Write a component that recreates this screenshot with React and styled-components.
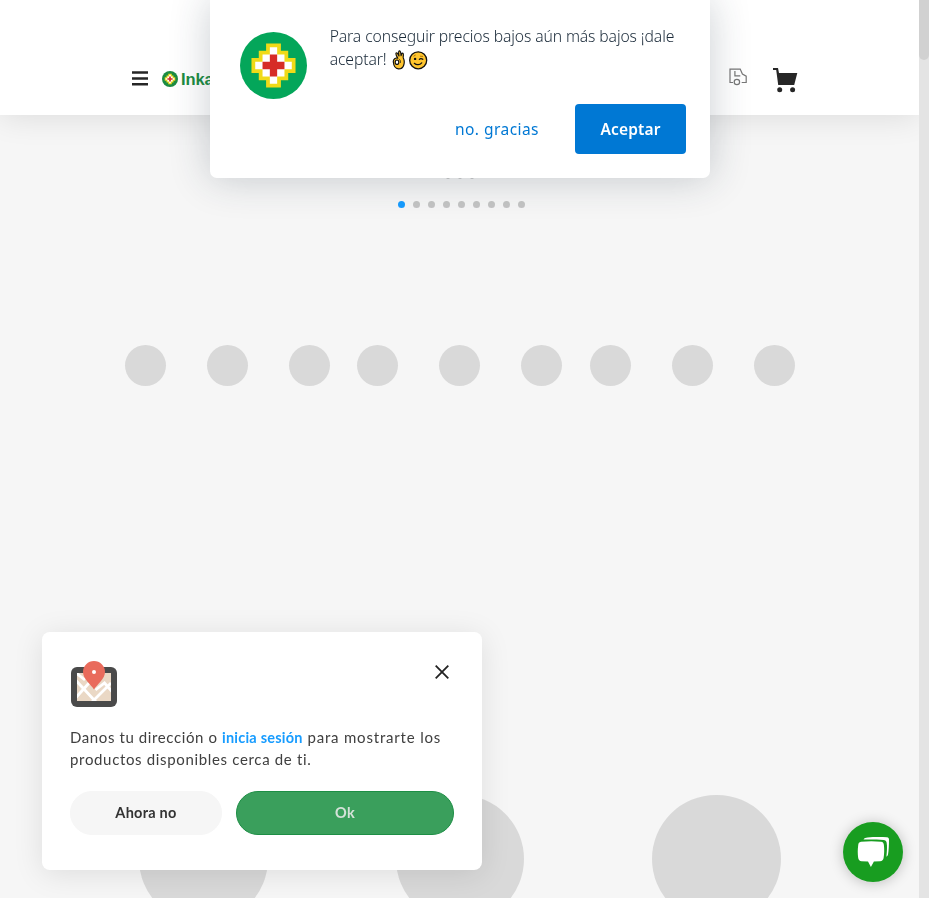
import React from "react";
import styled, { createGlobalStyle } from "styled-components";

const GlobalStyle = createGlobalStyle`
  * { box-sizing: border-box; }
  body { margin: 0; overflow: hidden; background: #f6f6f6; }
  button { font: inherit; border: 0; margin: 0; padding: 0; cursor: pointer; }
  svg { display: block; flex: none; }
`;

const Viewport = styled.div`
  display: grid;
  grid-template-columns: 1fr 10px;
  height: 898px;
  overflow: hidden;
`;

const Scrollbar = styled.div`
  background: #e4e4e4;
`;

const Thumb = styled.div`
  height: 60px;
  background: #d1d1d1;
  border-radius: 0 0 5px 5px;
`;

const Page = styled.main`
  display: flex;
  flex-direction: column;
  min-width: 0;
  overflow: hidden;
  background: #f6f6f6;
`;

const Header = styled.header`
  display: flex;
  align-items: center;
  flex: none;
  height: 115px;
  padding: 42px 121px 0 132px;
  background: #fff;
  box-shadow: 0 2px 30px rgba(0, 0, 0, 0.11);
`;

const Brand = styled.div`
  display: flex;
  align-items: center;
  gap: 3px;
  margin-left: 14px;
  color: #1c8c43;
  font: 700 16.5px/20px "Liberation Sans", Arial, sans-serif;
  letter-spacing: -0.1px;
`;

const HeaderActions = styled.div`
  display: flex;
  margin-left: auto;
  gap: 26px;
  padding-top: 3px;
`;

const Pager = styled.div`
  display: flex;
  flex: none;
  justify-content: center;
  gap: ${(p) => p.$gap}px;
  height: ${(p) => p.$size}px;
  margin-top: ${(p) => p.$top}px;
  padding-left: ${(p) => p.$inset || 0}px;
`;

const Dot = styled.span`
  width: ${(p) => p.$size}px;
  height: ${(p) => p.$size}px;
  border-radius: 50%;
  background: ${(p) => (p.$active ? "#179cff" : "#c4c4c4")};
`;

const CategoryRow = styled.div`
  display: flex;
  flex: none;
  gap: 27.4px;
  margin: 137px 0 0 124.6px;
`;

const CategoryGroup = styled.div`
  display: flex;
  gap: 40.8px;
`;

const Placeholder = styled.div`
  flex: none;
  width: ${(p) => p.$size}px;
  height: ${(p) => p.$size}px;
  border-radius: 50%;
  background: #d9d9d9;
`;

const ProductRow = styled.div`
  display: flex;
  flex: none;
  gap: 128px;
  margin: 408.8px 0 0 139px;
`;

const PushPrompt = styled.section`
  position: fixed;
  top: 0;
  left: 210px;
  display: flex;
  flex-direction: column;
  width: 500px;
  height: 178px;
  padding: 25px 24px 24px 30px;
  background: #fff;
  border-radius: 0 0 7px 7px;
  box-shadow: 0 0 40px rgba(33, 52, 68, 0.24);
  font-family: "Noto Sans", sans-serif;
`;

const PromptBody = styled.div`
  display: flex;
  gap: 22.7px;
  height: 79px;
`;

const PromptLogo = styled.div`
  padding-top: 7px;
`;

const PromptText = styled.p`
  margin: 0;
  color: #1a2a39;
  font-size: 15.7px;
  font-weight: 300;
  line-height: 23px;
  letter-spacing: -0.11px;
  white-space: nowrap;
`;

const TextLine = styled.span`
  display: flex;
  align-items: center;
`;

const Emojis = styled.span`
  display: flex;
  margin-left: 4px;
`;

const PromptActions = styled.div`
  display: flex;
  justify-content: flex-end;
  gap: 36px;
  height: 50px;
  font-size: 15.5px;
`;

const DeclineButton = styled.button`
  background: none;
  color: #0078d4;
  letter-spacing: 0.45px;
`;

const AcceptButton = styled.button`
  width: 111px;
  border-radius: 4px;
  background: #0078d4;
  color: #fff;
  && { font-weight: 600; }
  letter-spacing: 0.15px;
`;

const AddressCard = styled.section`
  position: fixed;
  left: 42px;
  top: 632px;
  width: 440px;
  height: 238px;
  padding: 28px;
  background: #fff;
  border-radius: 8px;
  box-shadow: 0 4px 30px rgba(0, 0, 0, 0.1);
  font-family: Lato, sans-serif;
`;

const CardTop = styled.div`
  display: flex;
  justify-content: space-between;
  height: 66px;
`;

const CloseButton = styled.button`
  width: 14px;
  height: 14px;
  margin: 5px 5px 0 0;
  background: none;
`;

const CardText = styled.p`
  height: 44px;
  margin: 0 0 21px;
  color: #404040;
  font-size: 15px;
  line-height: 22px;
  white-space: nowrap;
`;

const TextRun = styled.span`
  letter-spacing: ${(p) => p.$spacing}px;
`;

const LoginLink = styled.a`
  color: #179cff;
  font-size: 14.5px;
  line-height: 1;
  font-weight: 700;
  letter-spacing: 0.23px;
`;

const CardActions = styled.div`
  display: grid;
  grid-template-columns: 152px 218px;
  gap: 14px;
  height: 44px;
`;

const PillButton = styled.button`
  padding-bottom: 1px;
  border-radius: 22px;
  background: ${(p) => (p.$primary ? "#3a9f5c" : "#f6f6f6")};
  color: ${(p) => (p.$primary ? "#d5e2d9" : "#333")};
  border: 1px solid ${(p) => (p.$primary ? "#1d8e45" : "#f6f6f6")};
  letter-spacing: 0.25px;
  && { font-size: 14.5px; font-weight: 700; }
`;

const ChatButton = styled.button`
  position: fixed;
  left: 843px;
  top: 822px;
  width: 60px;
  height: 60px;
  border-radius: 50%;
  background: #189d20;
  box-shadow: 0 1px 14px rgba(0, 0, 0, 0.23);
`;

const MenuIcon = () => (
  <svg width="16" height="15" viewBox="0 0 16 15">
    <path d="M0 1.5h16M0 7.5h16M0 13.2h16" stroke="#262626" strokeWidth="2.5" />
  </svg>
);

const CrossLogo = ({ size, green = "#04a65a" }) => (
  <svg width={size} height={size} viewBox="0 0 66 66">
    <circle cx="33" cy="33" r="33" fill={green} />
    <path
      d="M29.4 15h7.2v7.2h7.2v7.2H51v7.2h-7.2v7.2h-7.2V51h-7.2v-7.2h-7.2v-7.2H15v-7.2h7.2v-7.2h7.2z"
      fill="#fff" stroke="#f0da18" strokeWidth="7.4" paintOrder="stroke"
    />
    <path d="M29.4 22.2h7.2v7.2h7.2v7.2h-7.2v7.2h-7.2v-7.2h-7.2v-7.2h7.2z" fill="#d62c26" />
  </svg>
);

const TruckIcon = () => (
  <svg width="18" height="18" viewBox="0 0 18 18" fill="none" stroke="#777" strokeWidth="1.2">
    <path d="M4 14.5H1V1.1h10.2l2.2 5 3.8 2v6.4h-4.5" />
    <path d="M5.9 2.9v4.9h5.4" />
    <circle cx="7.9" cy="14" r="2.7" />
  </svg>
);

const CartIcon = () => (
  <svg width="25" height="25" viewBox="0 0 25 25" fill="#262626">
    <path d="M0 0h5l1 4.9h18.3l-3.1 12.2H5.2L3.2 2H0z" />
    <circle cx="6.7" cy="21.7" r="2.5" />
    <circle cx="19.6" cy="21.7" r="2.5" />
  </svg>
);

const OkHand = () => (
  <svg width="17" height="20" viewBox="0.700 0 17 20">
    <path
      d="M7.5 8.2C6 5.7 5.1 3.500 5.900 2.900c.8-.6 1.800 1.100 2.800 3C8.300 3.500 7.800 1.200 9 .9c1.300-.3 1.600 2.500 1.800 4.700.3-1.600.9-2.900 1.800-2.400 1.100.6 0 3.100.4 4.700 1.200 2.400 1.200 5.300.2 7.800-.9 2.400-2.800 3.300-5.100 3.200-3.600-.2-4.700-3-5.100-7.100-.2-2.600 2.200-4.400 4.500-3.600z"
      fill="#ffc52e" stroke="#111" strokeWidth="1.2" strokeLinejoin="round"
    />
    <ellipse cx="6.700" cy="12.200" rx="1.800" ry="2.200" fill="#fff" stroke="#111" strokeWidth="1.200" />
    <path d="M9 9.200c1 .9 1.300 2.200 1.200 3.600" fill="none" stroke="#111" strokeWidth=".8" />
  </svg>
);

const WinkFace = () => (
  <svg width="20" height="20" viewBox="0 0 20 20">
    <circle cx="10.2" cy="10.3" r="8.5" fill="#ffc52e" stroke="#111" strokeWidth="1.3" />
    <circle cx="7.1" cy="8.9" r="1.2" fill="#111" />
    <path d="M11.3 9.3c.9-1 2.4-1 3.5 0M6.3 13.3c2.2 2 5.5 1.800 7.400-.5" fill="none" stroke="#111" strokeWidth="1.2" strokeLinecap="round" />
    <path d="M5.5 6.3 7.7 5M12 6.2l3 .2" stroke="#a66b00" strokeWidth=".9" />
  </svg>
);

const MapIcon = () => (
  <svg width="48" height="48" viewBox="0 0 48 48">
    <rect x="1" y="7" width="46" height="40" rx="6" fill="#4a4a4a" />
    <path d="M7 13h34v28H7z" fill="#ead8c5" />
    <svg x="7" y="13" width="34" height="28" viewBox="7 13 34 28">
      <path
        d="M5 12l10 8M5 19.500l21 22.500M6 37.500l13-14.500M22 42l19-19M25.500 30l9-7 8 9"
        fill="none" stroke="#fff" strokeWidth="2.800"
      />
    </svg>
    <path d="M24 29.5c-3-5-11-10.500-11-17.500a11 11 0 0 1 22 0C35 19 27 24.500 24 29.500z" fill="#e96b5c" />
    <circle cx="24" cy="12" r="2" fill="#fff" />
  </svg>
);

const CloseIcon = () => (
  <svg width="14" height="14" viewBox="0 0 14 14">
    <path d="M.7.7l12.6 12.6M13.3.7L.7 13.3" stroke="#222" strokeWidth="1.8" />
  </svg>
);

const ChatIcon = () => (
  <svg width="60" height="60" viewBox="0 0 60 60">
    <path d="M20.500 17.500c.9-1.700 2.200-2 4-2.100 6.700-.4 13.500-.4 19.500-.1 1.400.1 2 1 2 2.300 0 5.800-.3 11.500-1 15-.2 1.200-.7 1.700-1.600 2.100.5-5.200 1-10.500.2-14.200-.3-1.700-1.200-2.400-3-2.600-6.500-.5-13.500-.5-20.100-.4z" fill="#fff" />
    <path d="M18 19.800c7-.9 14-.9 20 0 2 .3 2.700 1.400 2.900 3.200.5 4.500.4 9-.3 13-.3 2.100-1.500 3-3.500 3.200l-6.200.4-3 5.400-2.900-5.400-6.400-.4c-2-.1-3.100-1.200-3.400-3.200-.6-4.200-.6-8.700 0-12.800.2-2 1-3.100 2.800-3.400z" fill="#fff" />
  </svg>
);

export default function App() {
  return (
    <Viewport>
      <GlobalStyle />
      <Page>
        <Header>
          <MenuIcon />
          <Brand><CrossLogo size={16} green="#1c8c43" />Inkafarma</Brand>
          <HeaderActions><TruckIcon /><CartIcon /></HeaderActions>
        </Header>
        <Pager $gap={8} $size={4} $top={60}>
          {[0, 1, 2].map((i) => <Dot key={i} $size={4} />)}
        </Pager>
        <Pager $gap={8} $size={7} $top={22} $inset={4}>
          {Array.from({ length: 9 }, (_, i) => <Dot key={i} $size={7} $active={i === 0} />)}
        </Pager>
        <CategoryRow>
          {[0, 1, 2].map((g) => (
            <CategoryGroup key={g}>
              {[0, 1, 2].map((i) => <Placeholder key={i} $size={41.2} />)}
            </CategoryGroup>
          ))}
        </CategoryRow>
        <ProductRow>
          {[0, 1, 2].map((i) => <Placeholder key={i} $size={128.5} />)}
        </ProductRow>
      </Page>
      <Scrollbar><Thumb /></Scrollbar>

      <PushPrompt>
        <PromptBody>
          <PromptLogo><CrossLogo size={67} /></PromptLogo>
          <PromptText>
            <TextLine>Para conseguir precios bajos aún más bajos ¡dale</TextLine>
            <TextLine>aceptar!<Emojis><OkHand /><WinkFace /></Emojis></TextLine>
          </PromptText>
        </PromptBody>
        <PromptActions>
          <DeclineButton>no. gracias</DeclineButton>
          <AcceptButton>Aceptar</AcceptButton>
        </PromptActions>
      </PushPrompt>

      <AddressCard>
        <CardTop>
          <MapIcon />
          <CloseButton aria-label="Cerrar"><CloseIcon /></CloseButton>
        </CardTop>
        <CardText>
          <TextRun $spacing={0.6}>Danos tu dirección o </TextRun>
          <LoginLink>inicia sesión</LoginLink>
          <TextRun $spacing={0.81}> para mostrarte los</TextRun>
          <br />
          <TextRun $spacing={0.66}>productos disponibles cerca de ti.</TextRun>
        </CardText>
        <CardActions>
          <PillButton>Ahora no</PillButton>
          <PillButton $primary>Ok</PillButton>
        </CardActions>
      </AddressCard>

      <ChatButton aria-label="Chat"><ChatIcon /></ChatButton>
    </Viewport>
  );
}
